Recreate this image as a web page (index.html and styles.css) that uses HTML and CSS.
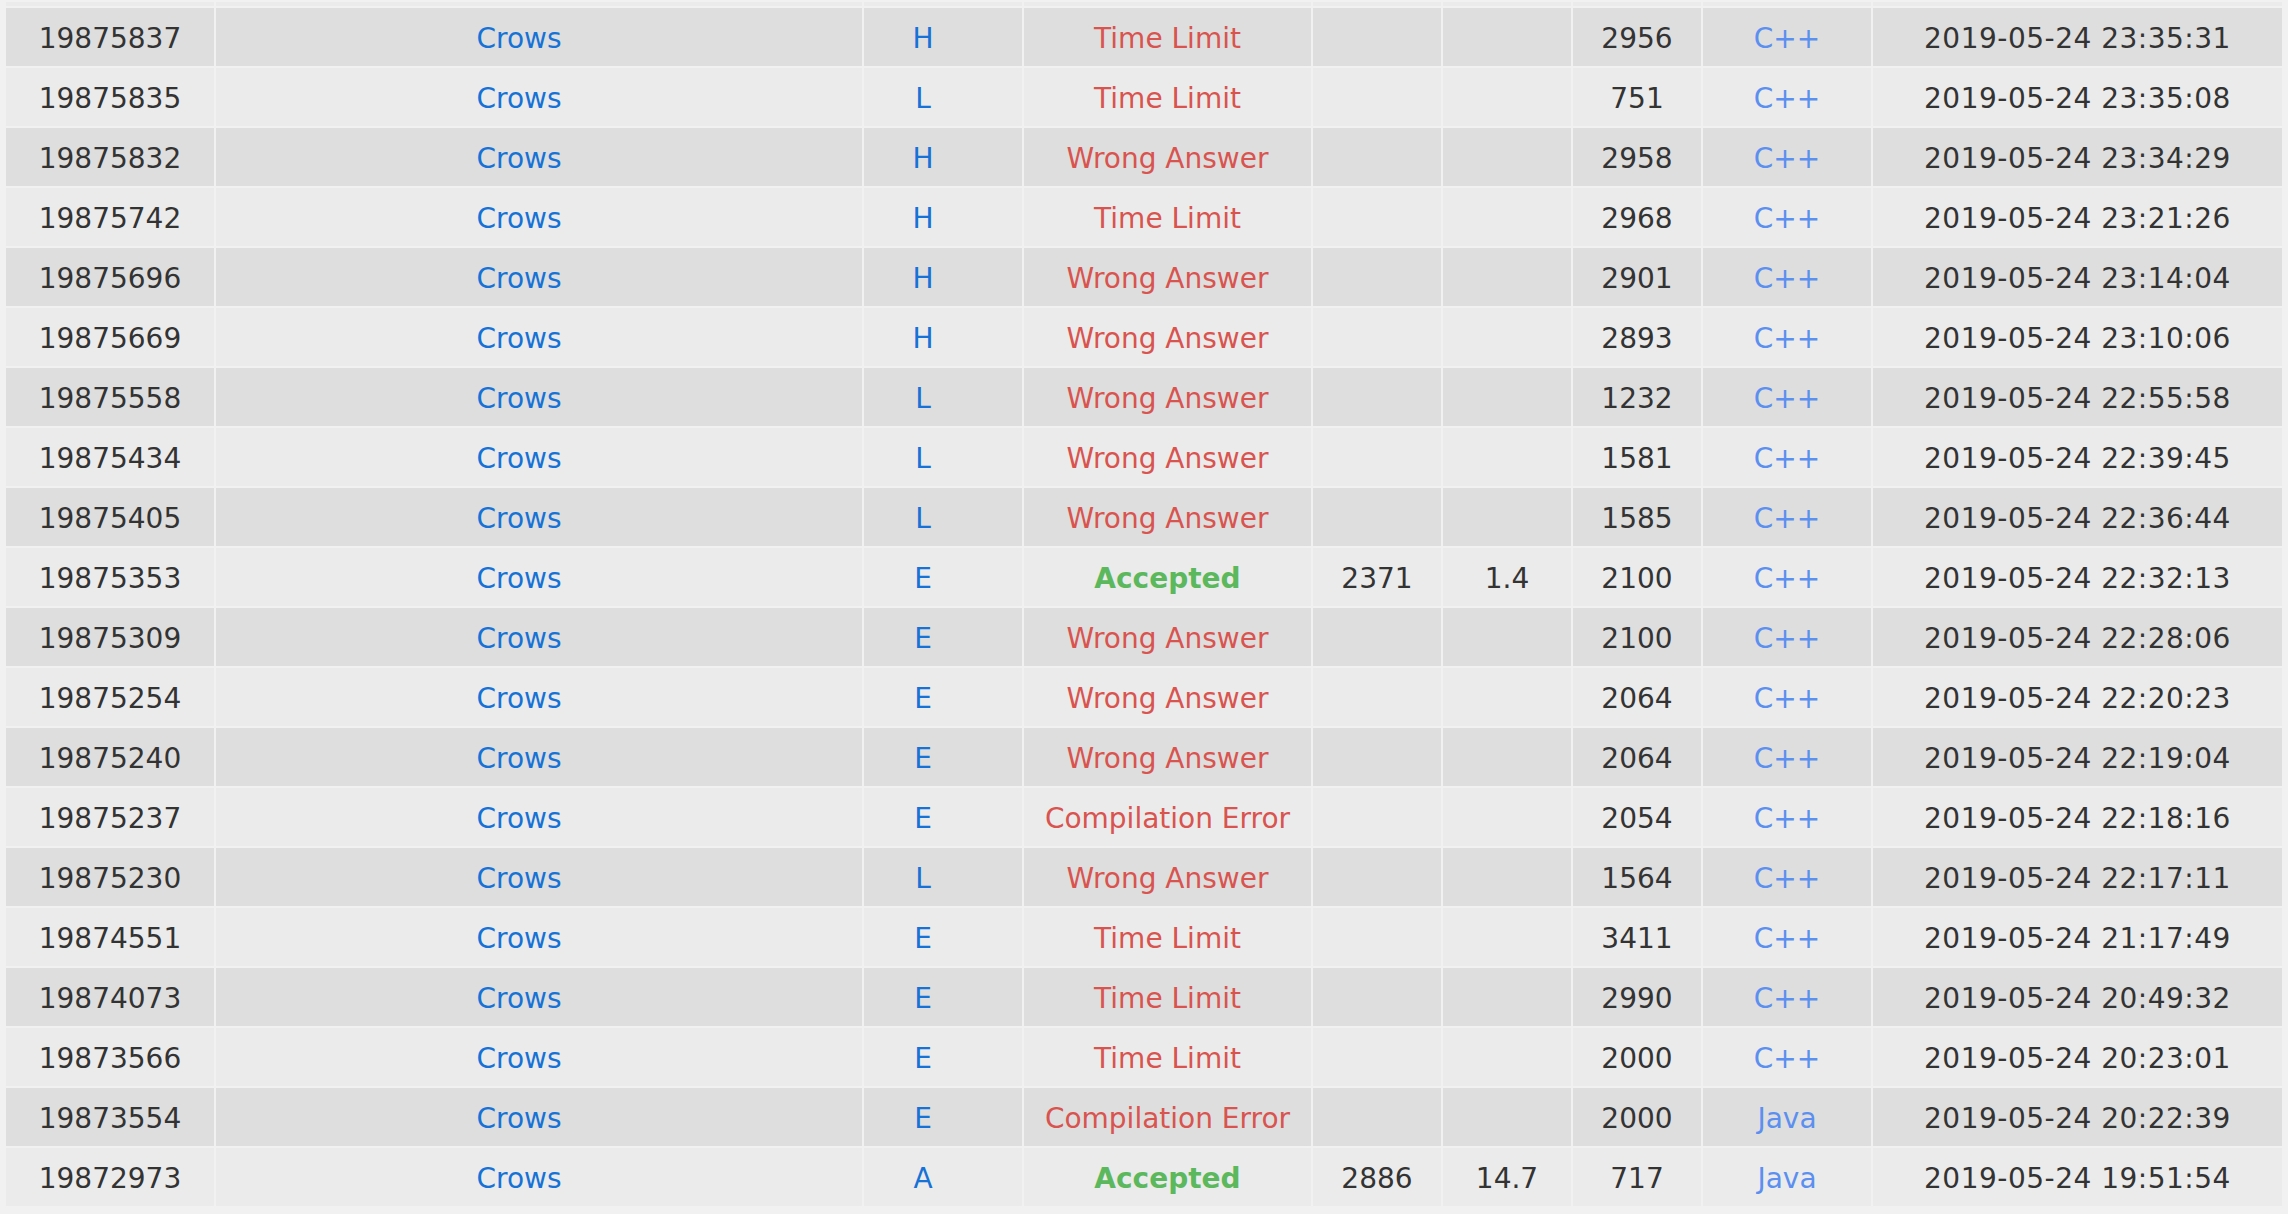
FILE: index.html
```html
<!DOCTYPE html>
<html>
<head>
<meta charset="utf-8">
<link rel="stylesheet" href="styles.css">
</head>
<body>
<div class="wrap">
<table class="status">
<colgroup>
<col class="c-id"><col class="c-user"><col class="c-prob"><col class="c-res"><col class="c-time"><col class="c-mem"><col class="c-len"><col class="c-lang"><col class="c-date">
</colgroup>
<tbody>
<tr class="cut light"><td></td><td></td><td></td><td></td><td></td><td></td><td></td><td></td><td></td></tr>
<tr class="dark"><td>19875837</td><td class="user"><a>Crows</a></td><td class="prob"><a>H</a></td><td class="bad">Time Limit</td><td></td><td></td><td>2956</td><td class="lang">C++</td><td class="date">2019-05-24 23:35:31</td></tr>
<tr class="light"><td>19875835</td><td class="user"><a>Crows</a></td><td class="prob"><a>L</a></td><td class="bad">Time Limit</td><td></td><td></td><td>751</td><td class="lang">C++</td><td class="date">2019-05-24 23:35:08</td></tr>
<tr class="dark"><td>19875832</td><td class="user"><a>Crows</a></td><td class="prob"><a>H</a></td><td class="bad">Wrong Answer</td><td></td><td></td><td>2958</td><td class="lang">C++</td><td class="date">2019-05-24 23:34:29</td></tr>
<tr class="light"><td>19875742</td><td class="user"><a>Crows</a></td><td class="prob"><a>H</a></td><td class="bad">Time Limit</td><td></td><td></td><td>2968</td><td class="lang">C++</td><td class="date">2019-05-24 23:21:26</td></tr>
<tr class="dark"><td>19875696</td><td class="user"><a>Crows</a></td><td class="prob"><a>H</a></td><td class="bad">Wrong Answer</td><td></td><td></td><td>2901</td><td class="lang">C++</td><td class="date">2019-05-24 23:14:04</td></tr>
<tr class="light"><td>19875669</td><td class="user"><a>Crows</a></td><td class="prob"><a>H</a></td><td class="bad">Wrong Answer</td><td></td><td></td><td>2893</td><td class="lang">C++</td><td class="date">2019-05-24 23:10:06</td></tr>
<tr class="dark"><td>19875558</td><td class="user"><a>Crows</a></td><td class="prob"><a>L</a></td><td class="bad">Wrong Answer</td><td></td><td></td><td>1232</td><td class="lang">C++</td><td class="date">2019-05-24 22:55:58</td></tr>
<tr class="light"><td>19875434</td><td class="user"><a>Crows</a></td><td class="prob"><a>L</a></td><td class="bad">Wrong Answer</td><td></td><td></td><td>1581</td><td class="lang">C++</td><td class="date">2019-05-24 22:39:45</td></tr>
<tr class="dark"><td>19875405</td><td class="user"><a>Crows</a></td><td class="prob"><a>L</a></td><td class="bad">Wrong Answer</td><td></td><td></td><td>1585</td><td class="lang">C++</td><td class="date">2019-05-24 22:36:44</td></tr>
<tr class="light"><td>19875353</td><td class="user"><a>Crows</a></td><td class="prob"><a>E</a></td><td class="ok">Accepted</td><td>2371</td><td>1.4</td><td>2100</td><td class="lang">C++</td><td class="date">2019-05-24 22:32:13</td></tr>
<tr class="dark"><td>19875309</td><td class="user"><a>Crows</a></td><td class="prob"><a>E</a></td><td class="bad">Wrong Answer</td><td></td><td></td><td>2100</td><td class="lang">C++</td><td class="date">2019-05-24 22:28:06</td></tr>
<tr class="light"><td>19875254</td><td class="user"><a>Crows</a></td><td class="prob"><a>E</a></td><td class="bad">Wrong Answer</td><td></td><td></td><td>2064</td><td class="lang">C++</td><td class="date">2019-05-24 22:20:23</td></tr>
<tr class="dark"><td>19875240</td><td class="user"><a>Crows</a></td><td class="prob"><a>E</a></td><td class="bad">Wrong Answer</td><td></td><td></td><td>2064</td><td class="lang">C++</td><td class="date">2019-05-24 22:19:04</td></tr>
<tr class="light"><td>19875237</td><td class="user"><a>Crows</a></td><td class="prob"><a>E</a></td><td class="bad">Compilation Error</td><td></td><td></td><td>2054</td><td class="lang">C++</td><td class="date">2019-05-24 22:18:16</td></tr>
<tr class="dark"><td>19875230</td><td class="user"><a>Crows</a></td><td class="prob"><a>L</a></td><td class="bad">Wrong Answer</td><td></td><td></td><td>1564</td><td class="lang">C++</td><td class="date">2019-05-24 22:17:11</td></tr>
<tr class="light"><td>19874551</td><td class="user"><a>Crows</a></td><td class="prob"><a>E</a></td><td class="bad">Time Limit</td><td></td><td></td><td>3411</td><td class="lang">C++</td><td class="date">2019-05-24 21:17:49</td></tr>
<tr class="dark"><td>19874073</td><td class="user"><a>Crows</a></td><td class="prob"><a>E</a></td><td class="bad">Time Limit</td><td></td><td></td><td>2990</td><td class="lang">C++</td><td class="date">2019-05-24 20:49:32</td></tr>
<tr class="light"><td>19873566</td><td class="user"><a>Crows</a></td><td class="prob"><a>E</a></td><td class="bad">Time Limit</td><td></td><td></td><td>2000</td><td class="lang">C++</td><td class="date">2019-05-24 20:23:01</td></tr>
<tr class="dark"><td>19873554</td><td class="user"><a>Crows</a></td><td class="prob"><a>E</a></td><td class="bad">Compilation Error</td><td></td><td></td><td>2000</td><td class="lang">Java</td><td class="date">2019-05-24 20:22:39</td></tr>
<tr class="light"><td>19872973</td><td class="user"><a>Crows</a></td><td class="prob"><a>A</a></td><td class="ok">Accepted</td><td>2886</td><td>14.7</td><td>717</td><td class="lang">Java</td><td class="date">2019-05-24 19:51:54</td></tr>
</tbody>
</table>
</div>
</body>
</html>
```
FILE: styles.css
```css
html, body {
  margin: 0;
  padding: 0;
  background: #f1f1f1;
}
body {
  font-family: "DejaVu Sans", Verdana, sans-serif;
  font-size: 28px;
  color: #333333;
  overflow: hidden;
}
.wrap {
  padding: 0 4px;
}
.status {
  width: 2280px;
  table-layout: fixed;
  border-collapse: separate;
  border-spacing: 2px;
}
.c-id { width: 208px; }
.c-user { width: 646px; }
.c-prob { width: 158px; }
.c-res { width: 287px; }
.c-time { width: 128px; }
.c-mem { width: 128px; }
.c-len { width: 128px; }
.c-lang { width: 168px; }
.c-date { width: 409px; }
.status td {
  height: 58px;
  padding: 3px 0 0 0;
  text-align: center;
  vertical-align: middle;
  white-space: nowrap;
  box-sizing: border-box;
}
.status tr.cut td {
  height: 4px;
  padding: 0;
}
.dark td { background: #dedede; }
.light td { background: #ebebeb; }
.status a {
  color: #1672d6;
  text-decoration: none;
}
.status td.user, .status td.prob {
  padding-right: 40px;
}
.bad { color: #d9534f; }
.ok { color: #5cb85c; font-weight: bold; }
.lang { color: #5b8ff0; }
.date { letter-spacing: 0.5px; }
```
